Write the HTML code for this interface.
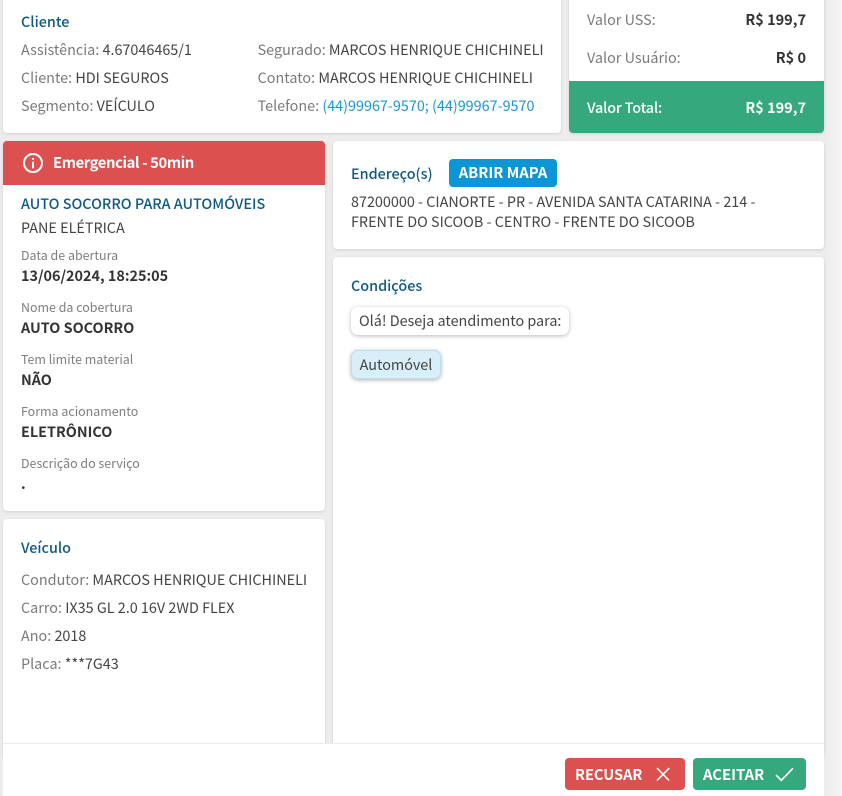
<!DOCTYPE html>
<html lang="pt-BR">
<head>
<meta charset="utf-8">
<title>Serviço</title>
<style>
*{box-sizing:border-box;margin:0;padding:0}
html,body{width:842px;height:796px;overflow:hidden;background:#ededed}
body{position:relative;font-family:"Noto Sans CJK JP","Liberation Sans",sans-serif;font-size:14.38px;color:#444}
.card{position:absolute;background:#fff;border-radius:4px;box-shadow:0 1px 3px rgba(0,0,0,.12)}
.t{position:absolute;white-space:nowrap;line-height:20px;height:20px;font-size:14.38px;color:#444}
.g{color:#7a7a7a}
.h{color:#0f5a82;font-weight:500}
.b{font-weight:700;color:#333}
.s{font-size:12.45px;color:#7f7f7f}
a{color:#1b97cf;text-decoration:none}
.rstrip{position:absolute;left:824px;top:0;width:18px;height:796px;background:linear-gradient(90deg,#ececec,#f5f5f5)}
</style>
</head>
<body>
<div class="rstrip"></div>

<div class="card" style="left:3px;top:-6px;width:558px;height:139px"></div>
<div class="t h" style="left:21px;top:12px">Cliente</div>
<div class="t" style="left:21px;top:40px"><span class="g">Assistência:</span> 4.67046465/1</div>
<div class="t" style="left:21px;top:68px"><span class="g">Cliente:</span> HDI SEGUROS</div>
<div class="t" style="left:21px;top:96px"><span class="g">Segmento:</span> VEÍCULO</div>
<div class="t" style="left:257.6px;top:40px"><span class="g">Segurado:</span> MARCOS HENRIQUE CHICHINELI</div>
<div class="t" style="left:257.6px;top:68px"><span class="g">Contato:</span> MARCOS HENRIQUE CHICHINELI</div>
<div class="t" style="left:257.6px;top:96px"><span class="g">Telefone:</span> <a>(44)99967-9570; (44)99967-9570</a></div>

<div class="card" style="left:569px;top:-6px;width:255px;height:139px;overflow:hidden">
  <div style="position:absolute;left:0;top:87px;width:255px;height:52px;background:#36a87d"></div>
</div>
<div class="t g" style="left:587px;top:10px">Valor USS:</div>
<div class="t b" style="right:36px;top:10px;font-size:14.5px">R$ 199,7</div>
<div class="t g" style="left:587px;top:48px">Valor Usuário:</div>
<div class="t b" style="right:36px;top:48px;font-size:14.5px">R$ 0</div>
<div class="t" style="left:587px;top:98px;color:#fff;font-weight:500;letter-spacing:-.15px">Valor Total:</div>
<div class="t" style="right:36px;top:98px;color:#fff;font-weight:700;font-size:14.5px">R$ 199,7</div>

<div class="card" style="left:3px;top:141px;width:322px;height:370px;overflow:hidden">
  <div style="position:absolute;left:0;top:0;width:322px;height:44px;background:#dc5050"></div>
</div>
<svg style="position:absolute;left:22px;top:152px" width="22" height="22" viewBox="0 0 22 22" fill="none" stroke="#fff" stroke-width="2">
  <circle cx="11" cy="11" r="9"/>
  <path d="M11 10.5v5" stroke-linecap="round"/>
  <circle cx="11" cy="6.8" r="1.1" fill="#fff" stroke="none"/>
</svg>
<div class="t" style="left:53px;top:153px;color:#fff;font-weight:700;font-size:14.8px;letter-spacing:-.4px">Emergencial - 50min</div>

<div class="t h" style="left:21px;top:193.6px">AUTO SOCORRO PARA AUTOMÓVEIS</div>
<div class="t" style="left:21px;top:218px">PANE ELÉTRICA</div>
<div class="t s" style="left:21px;top:245px">Data de abertura</div>
<div class="t b" style="left:21px;top:266px">13/06/2024, 18:25:05</div>
<div class="t s" style="left:21px;top:297px">Nome da cobertura</div>
<div class="t b" style="left:21px;top:318px">AUTO SOCORRO</div>
<div class="t s" style="left:21px;top:349px">Tem limite material</div>
<div class="t b" style="left:21px;top:370px">NÃO</div>
<div class="t s" style="left:21px;top:401px">Forma acionamento</div>
<div class="t b" style="left:21px;top:422px">ELETRÔNICO</div>
<div class="t s" style="left:21px;top:453px">Descrição do serviço</div>
<div class="t b" style="left:21px;top:474px">.</div>

<div class="card" style="left:3px;top:519px;width:322px;height:240px"></div>
<div class="t h" style="left:21px;top:538px">Veículo</div>
<div class="t" style="left:21px;top:570px"><span class="g">Condutor:</span> MARCOS HENRIQUE CHICHINELI</div>
<div class="t" style="left:21px;top:598px"><span class="g">Carro:</span> IX35 GL 2.0 16V 2WD FLEX</div>
<div class="t" style="left:21px;top:626px"><span class="g">Ano:</span> 2018</div>
<div class="t" style="left:21px;top:654px"><span class="g">Placa:</span> ***7G43</div>

<div class="card" style="left:333px;top:141px;width:491px;height:108px"></div>
<div class="t h" style="left:351px;top:164px">Endereço(s)</div>
<div style="position:absolute;left:449px;top:159px;width:108px;height:28px;background:#0c96d6;border-radius:4px;color:#fff;font-weight:700;font-size:14.8px;line-height:28px;text-align:center;white-space:nowrap">ABRIR MAPA</div>
<div class="t" style="left:351px;top:192px">87200000 - CIANORTE - PR - AVENIDA SANTA CATARINA - 214 -</div>
<div class="t" style="left:351px;top:212px">FRENTE DO SICOOB - CENTRO - FRENTE DO SICOOB</div>

<div class="card" style="left:333px;top:257px;width:491px;height:500px"></div>
<div class="t h" style="left:351px;top:276px">Condições</div>
<div style="position:absolute;left:351px;top:307px;width:218px;height:28px;background:#fff;border-radius:7px;box-shadow:0 1px 4px rgba(0,0,0,.28);font-size:14.38px;line-height:28px;padding-left:8px;white-space:nowrap;color:#444">Olá! Deseja atendimento para:</div>
<div style="position:absolute;left:351px;top:350px;width:90px;height:29px;background:#d8eef8;border:1px solid #bfdfee;border-radius:7px;box-shadow:0 1px 4px rgba(0,0,0,.32);font-size:14.38px;line-height:27px;text-align:center;white-space:nowrap;color:#444">Automóvel</div>

<div style="position:absolute;left:3px;top:743px;width:821px;height:53px;background:#fff;border-top:1px solid #ececec"></div>

<div style="position:absolute;left:565px;top:758px;width:120px;height:32px;background:#dc5050;border-radius:4px"></div>
<div class="t" style="left:575px;top:765px;color:#fff;font-weight:700;font-size:14.6px">RECUSAR</div>
<svg style="position:absolute;left:655px;top:766px" width="16" height="16" viewBox="0 0 16 16" fill="none" stroke="#fff" stroke-width="1.6"><path d="M2 2l12 12.5M14.3 2L2 14.5"/></svg>

<div style="position:absolute;left:693px;top:758px;width:113px;height:32px;background:#36a87d;border-radius:4px"></div>
<div class="t" style="left:703px;top:765px;color:#fff;font-weight:700;font-size:14.8px">ACEITAR</div>
<svg style="position:absolute;left:774px;top:766px" width="20" height="16" viewBox="0 0 20 16" fill="none" stroke="#fff" stroke-width="1.6"><path d="M2 9l5.3 5.3L19 2.2"/></svg>
</body>
</html>
